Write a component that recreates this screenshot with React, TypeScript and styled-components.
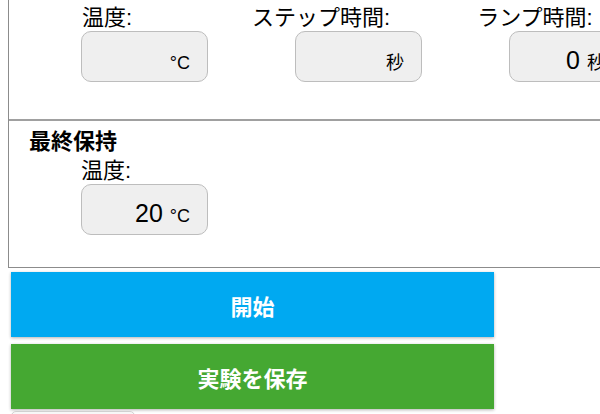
import styled, { createGlobalStyle } from 'styled-components';

const GlobalStyle = createGlobalStyle`
  html, body {
    margin: 0;
    padding: 0;
    overflow: hidden;
    background: #ffffff;
  }

  body {
    padding-left: 8px;
    font-family: "Liberation Sans", "Noto Sans CJK JP", sans-serif;
    color: #000000;
  }
`

const Panel = styled.div`
  width: 720px;
  border: 1px solid #8c8c8c;
  border-top: none;
`

const TopSection = styled.div`
  display: flex;
  padding: 5px 0 37px 0;
  border-bottom: 2px solid #a0a0a0;
`

const BottomSection = styled.div`
  padding: 8px 0 32px 20px;
`

const Title = styled.div`
  font-size: 22px;
  line-height: 26px;
  font-weight: 700;
  margin-bottom: 3px;
`

const Field = styled.div<{ $centered?: boolean }>`
  display: flex;
  flex-direction: column;
  width: ${({ $centered }) => ($centered ? '214px' : 'auto')};
  padding-left: ${({ $centered }) => ($centered ? '0' : '52px')};
`

const Label = styled.div<{ $centered?: boolean }>`
  font-size: 22px;
  line-height: 26px;
  width: ${({ $centered }) => ($centered ? '196px' : 'auto')};
  text-align: ${({ $centered }) => ($centered ? 'center' : 'left')};
`

const InputBox = styled.div<{ $centered?: boolean; $trail?: number }>`
  display: flex;
  justify-content: flex-end;
  align-items: baseline;
  box-sizing: border-box;
  width: 127px;
  height: 51px;
  margin-left: ${({ $centered }) => ($centered ? '72px' : '0')};
  padding: 14px ${({ $trail }) => $trail ?? 17}px 0 10px;
  border: 1.5px solid #bdbdbd;
  border-radius: 10px;
  background: #efefef;
`

const Value = styled.span`
  font-size: 25px;
  line-height: 28px;
`

const Unit = styled.span`
  margin-left: 7px;
  font-size: 18px;
`

const Buttons = styled.div`
  display: flex;
  flex-direction: column;
  gap: 7px;
  margin: 4px 0 0 3px;
`

const ActionButton = styled.button<{ $color: string }>`
  width: 483px;
  height: 65px;
  border: none;
  background: ${({ $color }) => $color};
  color: #ffffff;
  font-family: "Liberation Sans", "Noto Sans CJK JP", sans-serif;
  font-size: 22px;
  font-weight: 700;
  box-shadow: 0 1px 3px rgba(0, 0, 0, 0.3);
  cursor: pointer;
`

const SmallButton = styled.button`
  width: 124px;
  height: 30px;
  margin: -5px 0 0 0;
  border: 1px solid #d0d0d0;
  border-radius: 5px;
  background: #f7f7f7;
`

type StepField = { label: string; value?: string; unit: string; trail?: number };

const steps: StepField[] = [
  { label: '温度:', unit: '°C' },
  { label: 'ステップ時間:', unit: '秒' },
  { label: 'ランプ時間:', value: '0', unit: '秒', trail: 30 },
];

const NumberBox = ({ value, unit, centered, trail }: { value?: string; unit: string; centered?: boolean; trail?: number }) => (
  <InputBox $centered={centered} $trail={trail}>
    <Value>{value ?? '\u200b'}</Value>
    <Unit>{unit}</Unit>
  </InputBox>
);

const App = () => {
  return (
    <>
      <GlobalStyle />
      <Panel>
        <TopSection>
          {steps.map((s) => (
            <Field key={s.label} $centered>
              <Label $centered>{s.label}</Label>
              <NumberBox value={s.value} unit={s.unit} trail={s.trail} centered />
            </Field>
          ))}
        </TopSection>
        <BottomSection>
          <Title>最終保持</Title>
          <Field>
            <Label>温度:</Label>
            <NumberBox value="20" unit="°C" />
          </Field>
        </BottomSection>
      </Panel>
      <Buttons>
        <ActionButton $color="#00a9f1">開始</ActionButton>
        <ActionButton $color="#45a832">実験を保存</ActionButton>
        <SmallButton />
      </Buttons>
    </>
  );
};

export default App;
